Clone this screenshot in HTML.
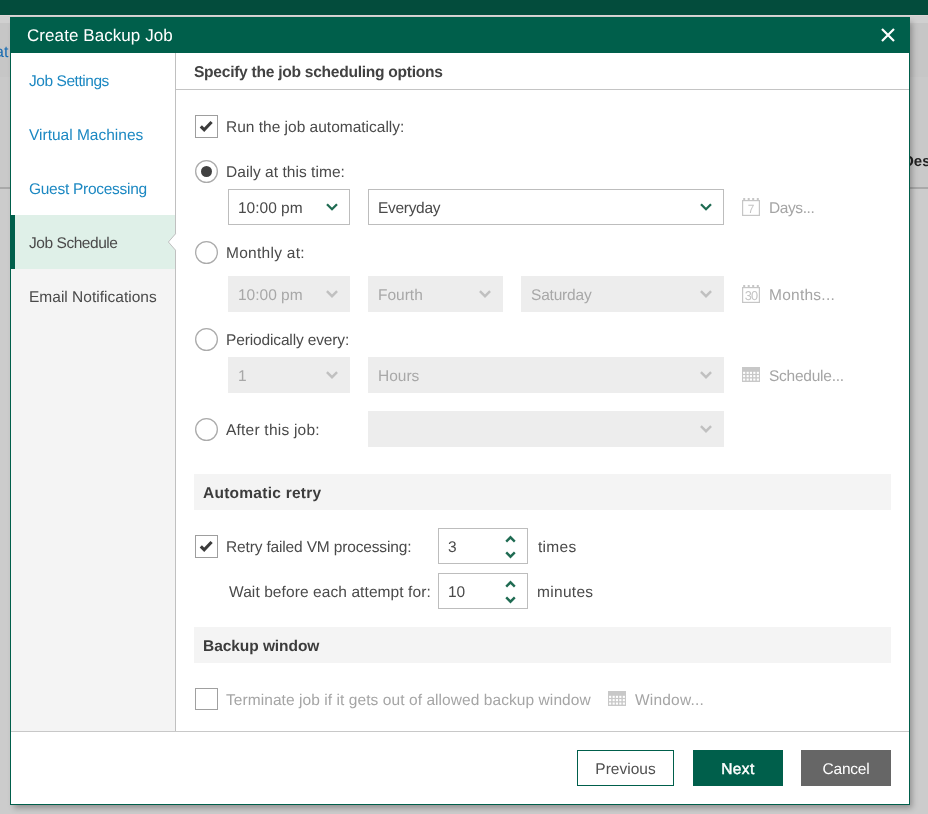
<!DOCTYPE html>
<html><head><meta charset="utf-8">
<style>
*{box-sizing:border-box;margin:0;padding:0}
html,body{width:928px;height:814px;overflow:hidden}
body{position:relative;background:#cccccc;font-family:"Liberation Sans",sans-serif;font-size:15.5px;color:#4a4a4a;text-rendering:geometricPrecision}
.abs{position:absolute}
#topbar{left:0;top:0;width:928px;height:15px;background:#034c3c}
#topline{left:0;top:15px;width:928px;height:1px;background:#dcd5d5}
#bgl1{left:0;top:16px;width:928px;height:7px;background:#d0d0d0}
#bgl2{left:0;top:23px;width:928px;height:54px;background:#c6c6c6}
#bgl3{left:0;top:77px;width:928px;height:110px;background:#c9c9c9}
.bgline{height:2px;background:#a9a9a9;top:187px}
#modal{left:10px;top:17px;width:900px;height:788px;background:#fff;border:1px solid #005f4b;box-shadow:3px 4px 6px -1px rgba(0,0,0,.3)}
#hdr{left:10px;top:17px;width:900px;height:36px;background:#005f4b}
#title{left:27px;top:26px;color:#fff;font-size:17px;letter-spacing:0.07px;line-height:20px;white-space:nowrap}
#nav{left:11px;top:53px;width:165px;height:678px;background:#f4f4f4;border-right:1px solid #c0c0c0}
.navi{position:absolute;left:0;width:164px;height:54px;line-height:58px;padding-left:18px;white-space:nowrap}
.done{background:#fff;color:#1c88c2}
.act{background:#dff0e8;color:#4a4a4a}
.act:before{content:"";position:absolute;left:0;top:0;width:4px;height:54px;background:#005f4b}
.later{color:#4a4a4a}
#ch{left:176px;top:53px;width:733px;height:37px;border-bottom:1px solid #c4c4c4}
#chtext{left:194px;top:63px;font-weight:bold;font-size:15.6px;letter-spacing:-0.28px;line-height:20px;color:#424242;white-space:nowrap}
.lbl{position:absolute;white-space:nowrap;line-height:22px}
.cb{position:absolute;width:23px;height:23px;border:1px solid #9e9e9e;background:#fff}
.rd{position:absolute;width:23px;height:23px;border:1px solid #a8a8a8;border-radius:50%;background:#fff}
.rd.on:after{content:"";position:absolute;left:5px;top:5px;width:11.5px;height:11.5px;border-radius:50%;background:#404040}
.dd{position:absolute;height:35px;border:1px solid #bdbdbd;background:#fff}
.dd span{position:absolute;left:10px;top:7px;line-height:22px;white-space:nowrap}
.dis{background:#ededed;border-color:#ededed;color:#a8a8a8}
.chev{position:absolute;width:12px;height:8px}
.rdw{position:absolute;width:23px;height:23px}
.dot{position:absolute;width:11px;height:11px;border-radius:50%;background:#404040}
.sec{position:absolute;left:194px;width:697px;height:36px;background:#f4f4f4}
.sec span{position:absolute;left:9px;top:9px;font-weight:bold;line-height:22px;color:#3c3c3c}
.link{color:#a5a5a5}
#foot{left:11px;top:731px;width:898px;height:1px;background:#c8c8c8}
.btn{position:absolute;top:750px;height:36px;line-height:39px;text-align:center;white-space:nowrap}
</style></head><body>
<svg width="0" height="0" style="position:absolute">
<defs>
<symbol id="chg" viewBox="0 0 12 8"><path d="M1 1.2L6 6.2L11 1.2" fill="none" stroke="#1f6b52" stroke-width="2.3"/></symbol>
<symbol id="chd" viewBox="0 0 12 8"><path d="M0.9 1.1L6 6.2L11.1 1.1" fill="none" stroke="#c0c0c0" stroke-width="2.4"/></symbol>
<symbol id="upg" viewBox="0 0 12 8"><path d="M1.2 6.6L5.5 2.3L9.8 6.6" fill="none" stroke="#1f6b52" stroke-width="2.4"/></symbol>
<symbol id="dng" viewBox="0 0 12 8"><path d="M1.2 1.4L5.5 5.7L9.8 1.4" fill="none" stroke="#1f6b52" stroke-width="2.4"/></symbol>
<symbol id="rdo" viewBox="0 0 23 23"><circle cx="11.5" cy="11.5" r="10.85" fill="#fff" stroke="#ababab" stroke-width="1.3"/></symbol>
</defs></svg>
<div id="wrap" style="position:absolute;left:0;top:0;width:928px;height:814px;will-change:transform">
<div id="topbar" class="abs"></div>
<div id="topline" class="abs"></div>
<div id="bgl1" class="abs"></div>
<div id="bgl2" class="abs"></div><div id="bgl3" class="abs"></div>
<div class="abs bgline" style="left:0;width:10px"></div>
<div class="abs bgline" style="left:910px;width:18px"></div>
<div class="abs" style="left:-5px;top:43px;color:#1a6cb2;font-size:16px;line-height:20px">at</div>
<div class="abs" style="left:903px;top:152px;color:#222;font-size:15px;font-weight:bold;line-height:20px">Des</div>

<div id="modal" class="abs"></div>
<div id="hdr" class="abs"></div>
<div id="title" class="abs">Create Backup Job</div>
<svg class="abs" style="left:880.5px;top:27.5px" width="14" height="14" viewBox="0 0 14 14"><path d="M1 1L13 13M13 1L1 13" stroke="#fff" stroke-width="2.2"/></svg>

<div id="nav" class="abs">
  <div class="navi done" style="top:0;letter-spacing:-0.45px">Job Settings</div>
  <div class="navi done" style="top:54px">Virtual Machines</div>
  <div class="navi done" style="top:108px;letter-spacing:-0.28px">Guest Processing</div>
  <div class="navi act" style="top:162px;letter-spacing:-0.45px">Job Schedule</div>
  <div class="navi later" style="top:216px;letter-spacing:0.01px">Email Notifications</div>
</div>

<svg class="abs" style="left:166px;top:231px" width="12" height="22" viewBox="0 0 12 22"><polygon points="9.5,0 12,0 12,22 9.5,22 9.5,19 2.4,11 9.5,3" fill="#fff"/><polyline points="9.5,0 9.5,2.8 2.4,11 9.5,19.2 9.5,22" fill="none" stroke="#c0c0c0" stroke-width="1"/></svg>
<div id="ch" class="abs"></div>
<div id="chtext" class="abs">Specify the job scheduling options</div>

<!-- run automatically -->
<div class="cb" style="left:195px;top:115px"><svg width="21" height="21" viewBox="0 0 21 21" style="position:absolute;left:0;top:0"><path d="M4.8 10.3L8.2 13.8L15.6 6.0" fill="none" stroke="#3c3c3c" stroke-width="3.1"/></svg></div>
<div class="lbl" style="left:226px;top:117px;letter-spacing:0px">Run the job automatically:</div>

<svg class="rdw" style="left:195px;top:160px"><use href="#rdo"/></svg><div class="dot" style="left:201px;top:166px"></div>
<div class="lbl" style="left:226px;top:162px;letter-spacing:0.05px">Daily at this time:</div>
<div class="dd" style="left:228px;top:189px;width:122px;height:36px"><span style="top:8px;left:9px">10:00 pm</span><svg class="chev" style="left:97px;top:13px"><use href="#chg"/></svg></div>
<div class="dd" style="left:368px;top:189px;width:356px;height:36px"><span style="top:8px;left:9px;letter-spacing:-0.3px">Everyday</span><svg class="chev" style="left:331px;top:13px"><use href="#chg"/></svg></div>
<svg class="abs" style="left:742px;top:198px" width="18" height="18" viewBox="0 0 18 18"><g fill="#c6c6c6"><rect x="1.2" y="0" width="2" height="2.2"/><rect x="5.7" y="0" width="2" height="2.2"/><rect x="10.2" y="0" width="2" height="2.2"/><rect x="14.8" y="0" width="2" height="2.2"/></g><rect x="0.6" y="2.6" width="16.8" height="14.8" fill="none" stroke="#c6c6c6" stroke-width="1.2"/><text x="9" y="14.6" text-anchor="middle" font-family="Liberation Sans" font-size="12" fill="#c4c4c4">7</text></svg>
<div class="lbl link" style="left:769px;top:198px;letter-spacing:-0.4px">Days...</div>

<svg class="rdw" style="left:195px;top:241px"><use href="#rdo"/></svg>
<div class="lbl" style="left:226px;top:243px;letter-spacing:0.27px">Monthly at:</div>
<div class="dd dis" style="left:228px;top:276px;width:122px;height:36px"><span style="top:8px;left:9px">10:00 pm</span><svg class="chev" style="left:97px;top:13px"><use href="#chd"/></svg></div>
<div class="dd dis" style="left:368px;top:276px;width:135px;height:36px"><span style="top:8px;left:9px">Fourth</span><svg class="chev" style="left:110px;top:13px"><use href="#chd"/></svg></div>
<div class="dd dis" style="left:521px;top:276px;width:203px;height:36px"><span style="top:8px;left:9px;letter-spacing:-0.2px">Saturday</span><svg class="chev" style="left:178px;top:13px"><use href="#chd"/></svg></div>
<svg class="abs" style="left:742px;top:285px" width="18" height="18" viewBox="0 0 18 18"><g fill="#c6c6c6"><rect x="1.2" y="0" width="2" height="2.2"/><rect x="5.7" y="0" width="2" height="2.2"/><rect x="10.2" y="0" width="2" height="2.2"/><rect x="14.8" y="0" width="2" height="2.2"/></g><rect x="0.6" y="2.6" width="16.8" height="14.8" fill="none" stroke="#c6c6c6" stroke-width="1.2"/><text x="9" y="14.6" text-anchor="middle" font-family="Liberation Sans" font-size="12.8" letter-spacing="-0.9" fill="#c4c4c4">30</text></svg>
<div class="lbl link" style="left:769px;top:285px;letter-spacing:0.25px">Months...</div>

<svg class="rdw" style="left:195px;top:328px"><use href="#rdo"/></svg>
<div class="lbl" style="left:226px;top:330px;letter-spacing:-0.14px">Periodically every:</div>
<div class="dd dis" style="left:228px;top:357px;width:122px;height:36px"><span style="top:8px;left:9px">1</span><svg class="chev" style="left:97px;top:13px"><use href="#chd"/></svg></div>
<div class="dd dis" style="left:368px;top:357px;width:356px;height:36px"><span style="top:8px;left:9px">Hours</span><svg class="chev" style="left:331px;top:13px"><use href="#chd"/></svg></div>
<svg class="abs" style="left:742px;top:367px" width="18" height="15" viewBox="0 0 18 15"><rect width="18" height="15" fill="#c8c8c8"/><g fill="#fff"><rect x="1.1" y="4.8" width="2.1" height="2.1"/><rect x="4.6" y="4.8" width="2.1" height="2.1"/><rect x="7.9" y="4.8" width="2.1" height="2.1"/><rect x="11.3" y="4.8" width="2.1" height="2.1"/><rect x="14.8" y="4.8" width="2.1" height="2.1"/><rect x="1.1" y="8.1" width="2.1" height="2.1"/><rect x="4.6" y="8.1" width="2.1" height="2.1"/><rect x="7.9" y="8.1" width="2.1" height="2.1"/><rect x="11.3" y="8.1" width="2.1" height="2.1"/><rect x="14.8" y="8.1" width="2.1" height="2.1"/><rect x="1.1" y="11.5" width="2.1" height="2.1"/><rect x="4.6" y="11.5" width="2.1" height="2.1"/><rect x="7.9" y="11.5" width="2.1" height="2.1"/><rect x="11.3" y="11.5" width="2.1" height="2.1"/><rect x="14.8" y="11.5" width="2.1" height="2.1"/></g></svg>
<div class="lbl link" style="left:769px;top:366px;letter-spacing:-0.25px">Schedule...</div>

<svg class="rdw" style="left:195px;top:418px"><use href="#rdo"/></svg>
<div class="lbl" style="left:226px;top:420px;letter-spacing:0.22px">After this job:</div>
<div class="dd dis" style="left:368px;top:411px;width:356px;height:36px"><svg class="chev" style="left:331px;top:13px"><use href="#chd"/></svg></div>

<div class="sec" style="top:474px"><span style="letter-spacing:0.26px">Automatic retry</span></div>
<div class="cb" style="left:195px;top:535px"><svg width="21" height="21" viewBox="0 0 21 21" style="position:absolute;left:0;top:0"><path d="M4.8 10.3L8.2 13.8L15.6 6.0" fill="none" stroke="#3c3c3c" stroke-width="3.1"/></svg></div>
<div class="lbl" style="left:226px;top:537px;letter-spacing:-0.155px">Retry failed VM processing:</div>
<div class="dd" style="left:438px;top:528px;width:90px;height:36px"><span style="top:8px;left:9px">3</span><svg class="chev" style="left:65.6px;top:5.5px"><use href="#upg"/></svg><svg class="chev" style="left:65.6px;top:22px"><use href="#dng"/></svg></div>
<div class="lbl" style="left:538px;top:537px;letter-spacing:0.3px">times</div>
<div class="lbl" style="left:229px;top:582px;letter-spacing:0.087px">Wait before each attempt for:</div>
<div class="dd" style="left:438px;top:573px;width:90px;height:36px"><span style="top:8px;left:9px">10</span><svg class="chev" style="left:65.6px;top:5.5px"><use href="#upg"/></svg><svg class="chev" style="left:65.6px;top:22px"><use href="#dng"/></svg></div>
<div class="lbl" style="left:537px;top:582px;letter-spacing:0.3px">minutes</div>

<div class="sec" style="top:627px"><span style="letter-spacing:-0.06px">Backup window</span></div>
<div class="cb" style="left:195px;top:688px;height:22px;border-color:#a0a0a0"></div>
<div class="lbl link" style="left:226px;top:690px;letter-spacing:0.07px">Terminate job if it gets out of allowed backup window</div>
<svg class="abs" style="left:608px;top:691px" width="18" height="15" viewBox="0 0 18 15"><rect width="18" height="15" fill="#c8c8c8"/><g fill="#fff"><rect x="1.1" y="4.8" width="2.1" height="2.1"/><rect x="4.6" y="4.8" width="2.1" height="2.1"/><rect x="7.9" y="4.8" width="2.1" height="2.1"/><rect x="11.3" y="4.8" width="2.1" height="2.1"/><rect x="14.8" y="4.8" width="2.1" height="2.1"/><rect x="1.1" y="8.1" width="2.1" height="2.1"/><rect x="4.6" y="8.1" width="2.1" height="2.1"/><rect x="7.9" y="8.1" width="2.1" height="2.1"/><rect x="11.3" y="8.1" width="2.1" height="2.1"/><rect x="14.8" y="8.1" width="2.1" height="2.1"/><rect x="1.1" y="11.5" width="2.1" height="2.1"/><rect x="4.6" y="11.5" width="2.1" height="2.1"/><rect x="7.9" y="11.5" width="2.1" height="2.1"/><rect x="11.3" y="11.5" width="2.1" height="2.1"/><rect x="14.8" y="11.5" width="2.1" height="2.1"/></g></svg>
<div class="lbl link" style="left:635px;top:690px;letter-spacing:0.2px">Window...</div>
<div id="foot" class="abs"></div>
<div class="btn" style="left:577px;width:97px;line-height:37px;border:1px solid #005f4b;color:#505050;background:#fff">Previous</div>
<div class="btn" style="left:693px;width:90px;background:#005f4b;color:#fff;-webkit-text-stroke:0.45px #fff;letter-spacing:0.4px">Next</div>
<div class="btn" style="left:801px;width:90px;background:#666;color:#fff;letter-spacing:-0.2px">Cancel</div>
</div>
</body></html>
